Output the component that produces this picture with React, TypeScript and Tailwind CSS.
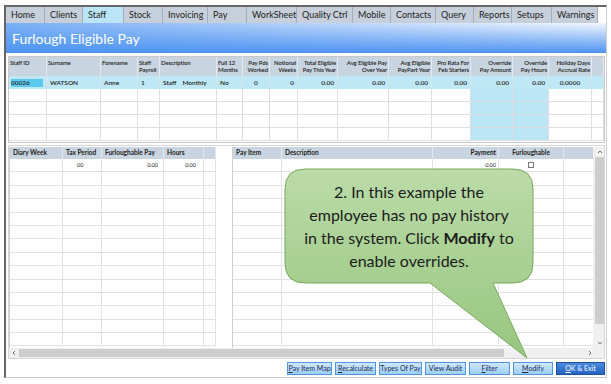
import React from 'react';

const tabs = [
  { label: 'Home', w: 'w-[39px]' },
  { label: 'Clients', w: 'w-[38px]' },
  { label: 'Staff', w: 'w-[41px]', active: true },
  { label: 'Stock', w: 'w-[39px]' },
  { label: 'Invoicing', w: 'w-[45px]' },
  { label: 'Pay', w: 'w-[39px]' },
  { label: 'WorkSheet', w: 'w-[50px]' },
  { label: 'Quality Ctrl', w: 'w-[56px]' },
  { label: 'Mobile', w: 'w-[38px]' },
  { label: 'Contacts', w: 'w-[45px]' },
  { label: 'Query', w: 'w-[38px]' },
  { label: 'Reports', w: 'w-[38px]' },
  { label: 'Setups', w: 'w-[40px]' },
  { label: 'Warnings', w: 'w-[46px]' },
];

const topGrid =
  'grid grid-cols-[38px_54px_37px_22px_57px_26px_27px_28px_40px_51px_43px_39px_42px_36px_43px_12px]';

const topHeaders: { lines: string[]; align: string }[] = [
  { lines: ['Staff ID'], align: 'text-left' },
  { lines: ['Surname'], align: 'text-left' },
  { lines: ['Forename'], align: 'text-left' },
  { lines: ['Staff', 'Payroll'], align: 'text-left' },
  { lines: ['Description'], align: 'text-left' },
  { lines: ['Full 12', 'Months'], align: 'text-left' },
  { lines: ['Pay Pds', 'Worked'], align: 'text-right' },
  { lines: ['Notional', 'Weeks'], align: 'text-right' },
  { lines: ['Total Eligible', 'Pay This Year'], align: 'text-right' },
  { lines: ['Avg Eligible Pay', 'Over Year'], align: 'text-right' },
  { lines: ['Avg Eligible', 'PayPart Year'], align: 'text-right' },
  { lines: ['Pro Rata For', 'Feb Starters'], align: 'text-right' },
  { lines: ['Override', 'Pay Amount'], align: 'text-right' },
  { lines: ['Override', 'Pay Hours'], align: 'text-right' },
  { lines: ['Holiday Days', 'Accrual Rate'], align: 'text-right' },
  { lines: [''], align: 'text-left' },
];

const rowValues: { v: string; align: string }[] = [
  { v: '', align: 'text-left' },
  { v: 'WATSON', align: 'text-left' },
  { v: 'Anne', align: 'text-left' },
  { v: '1', align: 'text-left' },
  { v: '', align: 'text-left' },
  { v: 'No', align: 'text-left' },
  { v: '0', align: 'text-center' },
  { v: '0', align: 'text-right' },
  { v: '0.00', align: 'text-right' },
  { v: '0.00', align: 'text-right' },
  { v: '0.00', align: 'text-right' },
  { v: '0.00', align: 'text-right' },
  { v: '0.00', align: 'text-right' },
  { v: '0.00', align: 'text-right' },
  { v: '0.0000', align: 'text-center' },
  { v: '', align: 'text-left' },
];

const leftGrid = 'grid grid-cols-[53px_39px_62px_40px_12px]';
const rightGrid = 'grid grid-cols-[49px_151px_66px_65px_30px]';

const Chevron = ({ dir }: { dir: 'up' | 'down' | 'left' | 'right' }) => {
  const d = {
    up: 'M1 4 L3 2 L5 4',
    down: 'M1 2 L3 4 L5 2',
    left: 'M4 1 L2 3 L4 5',
    right: 'M2 1 L4 3 L2 5',
  }[dir];
  return (
    <svg width="6" height="6" viewBox="0 0 6 6">
      <path d={d} fill="none" stroke="#606060" strokeWidth="0.9" />
    </svg>
  );
};

const Button = ({ w, children, primary }: { w: string; children: React.ReactNode; primary?: boolean }) => (
  <div
    className={`${w} h-[13px] flex items-center justify-center text-[7px] whitespace-nowrap border ${
      primary
        ? 'border-[#1f4f9c] bg-[image:linear-gradient(to_bottom,#4a8be0,#2463c2)] text-white'
        : 'border-[#4f95e2] bg-[image:linear-gradient(to_bottom,#cfe8fe,#9dcff9)] text-[#1c2a48]'
    }`}
  >
    {children}
  </div>
);

const App: React.FC = () => {
  const emptyRows = [0, 1, 2, 3];
  const lowerRows = Array.from({ length: 14 }, (_, i) => i);

  return (
    <div className="relative w-[611px] h-[384px] overflow-hidden bg-white font-['Lato',sans-serif] text-[#222]">
      <div className="ml-[4px] mt-[5px] w-[603px] h-[373px] border-l-2 border-t-2 border-[#666] border-r border-r-[#d0d0d0] border-b border-b-[#c9c9c9] flex flex-col">
        {/* tabs */}
        <div className="flex h-[16px] shrink-0">
          {tabs.map((t) => (
            <div
              key={t.label}
              className={`${t.w} flex items-center pl-[5px] text-[9px] border-r border-[#a4aeb9] ${
                t.active ? 'bg-[#b9e5f6]' : 'bg-[#c7d0da]'
              }`}
            >
              {t.label}
            </div>
          ))}
        </div>

        {/* title */}
        <div className="h-[30px] shrink-0 flex items-center pl-[6px] text-white text-[14px] bg-[image:linear-gradient(to_bottom,rgba(77,147,242,0)_0%,rgba(77,147,242,1)_100%),linear-gradient(to_right,#7cb0f6,#f3f7fe)]">
          Furlough Eligible Pay
        </div>

        {/* staff table */}
        <div className="mt-[3px] ml-[2px] w-[597px] h-[87px] shrink-0 border border-[#c8c8c8] text-[6px] leading-[7px]">
          <div className={`${topGrid} h-[19px] bg-[#c8d4df] font-semibold text-[#222]`}>
            {topHeaders.map((h, i) => (
              <div
                key={i}
                className={`${h.align} px-[1px] pt-[2px] border-r border-[#e3e9ef] whitespace-nowrap overflow-hidden tracking-[-0.1px]`}
              >
                {h.lines.map((l, j) => (
                  <div key={j}>{l}</div>
                ))}
              </div>
            ))}
          </div>
          <div className={`${topGrid} h-[13px] bg-[#bfe8f6] font-semibold text-[6.5px]`}>
            {rowValues.map((c, i) => (
              <div
                key={i}
                className={`flex items-center px-[3px] border-r border-[#d6e3e8] whitespace-nowrap ${
                  c.align === 'text-right' ? 'justify-end' : c.align === 'text-center' ? 'justify-center' : ''
                }`}
              >
                {i === 0 ? (
                  <div className="w-[33px] h-[8px] -ml-[1px] bg-[#5ccaee] flex items-center">00026</div>
                ) : i === 4 ? (
                  <span>
                    Staff<span className="inline-block w-[6px]" />Monthly
                  </span>
                ) : (
                  c.v
                )}
              </div>
            ))}
          </div>
          {emptyRows.map((r) => (
            <div key={r} className={`${topGrid} h-[13px]`}>
              {topHeaders.map((_, i) => (
                <div
                  key={i}
                  className={`border-r border-b border-[#dedede] ${i === 12 || i === 13 ? 'bg-[#b9e5f5]' : ''}`}
                />
              ))}
            </div>
          ))}
        </div>

        {/* lower panel */}
        <div className="mt-[2px] ml-[2px] w-[597px] h-[214px] shrink-0 border border-[#d6d6d6] flex flex-col">
          <div className="flex flex-1 pt-[1px]">
            {/* diary grid */}
            <div className="w-[206px] border-l border-[#d0d0d0]">
              <div className={`${leftGrid} h-[12px] bg-[#c8d4df] text-[6.5px] font-bold text-[#222]`}>
                {['Diary Week', 'Tax Period', 'Furloughable Pay', 'Hours', ''].map((h, i) => (
                  <div key={i} className="flex items-center pl-[3px] border-r border-[#e3e9ef] whitespace-nowrap">
                    {h}
                  </div>
                ))}
              </div>
              {lowerRows.map((r) => (
                <div key={r} className={`${leftGrid} h-[13.4px] text-[5.5px]`}>
                  <div className="border-r border-b border-[#e2e2e2]" />
                  <div className="border-r border-b border-[#e2e2e2] pl-[14px] flex items-center">{r === 0 ? '00' : ''}</div>
                  <div className="border-r border-b border-[#e2e2e2] pr-[5px] flex items-center justify-end">{r === 0 ? '0.00' : ''}</div>
                  <div className="border-r border-b border-[#e2e2e2] pr-[7px] flex items-center justify-end">{r === 0 ? '0.00' : ''}</div>
                  <div className="border-r border-b border-[#e2e2e2]" />
                </div>
              ))}
            </div>

            <div className="w-[17px]" />

            {/* pay items grid */}
            <div className="w-[361px] border-l border-[#d0d0d0]">
              <div className={`${rightGrid} h-[12px] bg-[#c8d4df] text-[6.5px] font-bold text-[#222]`}>
                <div className="flex items-center pl-[3px] border-r border-[#e3e9ef]">Pay Item</div>
                <div className="flex items-center pl-[3px] border-r border-[#e3e9ef]">Description</div>
                <div className="flex items-center justify-end pr-[2px] border-r border-[#e3e9ef]">Payment</div>
                <div className="flex items-center justify-center border-r border-[#e3e9ef]">Furloughable</div>
                <div />
              </div>
              {lowerRows.map((r) => (
                <div key={r} className={`${rightGrid} h-[13.4px] text-[5.5px]`}>
                  <div className="border-r border-b border-[#e2e2e2]" />
                  <div className="border-r border-b border-[#e2e2e2]" />
                  <div className="border-r border-b border-[#e2e2e2] pr-[2px] flex items-center justify-end">{r === 0 ? '0.00' : ''}</div>
                  <div className="border-r border-b border-[#e2e2e2] flex items-center justify-center">
                    {r === 0 && <div className="w-[6px] h-[6px] border border-[#777] bg-white" />}
                  </div>
                  <div className="border-b border-[#e2e2e2]" />
                </div>
              ))}
            </div>

            {/* vertical scrollbar */}
            <div className="w-[11px] flex flex-col bg-[#f0f0f0] pl-[2px]">
              <div className="h-[10px] flex items-center justify-center">
                <Chevron dir="up" />
              </div>
              <div className="flex-1 pb-[14px]">
                <div className="h-full bg-[#cdcdcd]" />
              </div>
              <div className="h-[10px] flex items-center justify-center">
                <Chevron dir="down" />
              </div>
            </div>
          </div>

          {/* horizontal scrollbar */}
          <div className="h-[10px] shrink-0 flex items-center bg-[#f0f0f0]">
            <div className="w-[10px] flex justify-center">
              <Chevron dir="left" />
            </div>
            <div className="w-[485px] h-[8px] bg-[#cdcdcd]" />
            <div className="flex-1" />
            <div className="w-[10px] flex justify-center mr-[9px]">
              <Chevron dir="right" />
            </div>
          </div>
        </div>

        {/* buttons */}
        <div className="mt-[3px] flex justify-end gap-[3px] pr-[1px] shrink-0">
          <Button w="w-[45px]">
            <span className="underline">P</span>ay Item Map
          </Button>
          <Button w="w-[41px]">
            <span className="underline">R</span>ecalculate
          </Button>
          <Button w="w-[43px]">Types Of Pay</Button>
          <Button w="w-[41px]">View Audit</Button>
          <Button w="w-[41px]">
            <span className="underline">F</span>ilter
          </Button>
          <Button w="w-[40px]">
            <span className="underline">M</span>odify
          </Button>
          <Button w="w-[49px]" primary>
            <span className="underline">O</span>K &amp; Exit
          </Button>
        </div>
      </div>

      {/* callout */}
      <svg className="absolute left-0 top-0 pointer-events-none" width="611" height="384" viewBox="0 0 611 384">
        <defs>
          <linearGradient id="callout" x1="0" y1="0" x2="0" y2="1">
            <stop offset="0" stopColor="#bbdba8" />
            <stop offset="1" stopColor="#97c67e" />
          </linearGradient>
        </defs>
        <path
          d="M305 169 H513 Q533 169 533 189 V263 Q533 283 513 283 H493 L527 358 L430 283 H305 Q285 283 285 263 V189 Q285 169 305 169 Z"
          fill="url(#callout)"
          stroke="#78a95c"
          strokeWidth="1"
        />
      </svg>
      <div className="absolute left-[285px] top-[169px] w-[248px] h-[114px] flex items-center justify-center text-center text-[16px] leading-[23px] text-[#1b1b1b]">
        <div>
          2. In this example the
          <br />
          employee has no pay history
          <br />
          in the system. Click <b>Modify</b> to
          <br />
          enable overrides.
        </div>
      </div>
    </div>
  );
};

export default App;
